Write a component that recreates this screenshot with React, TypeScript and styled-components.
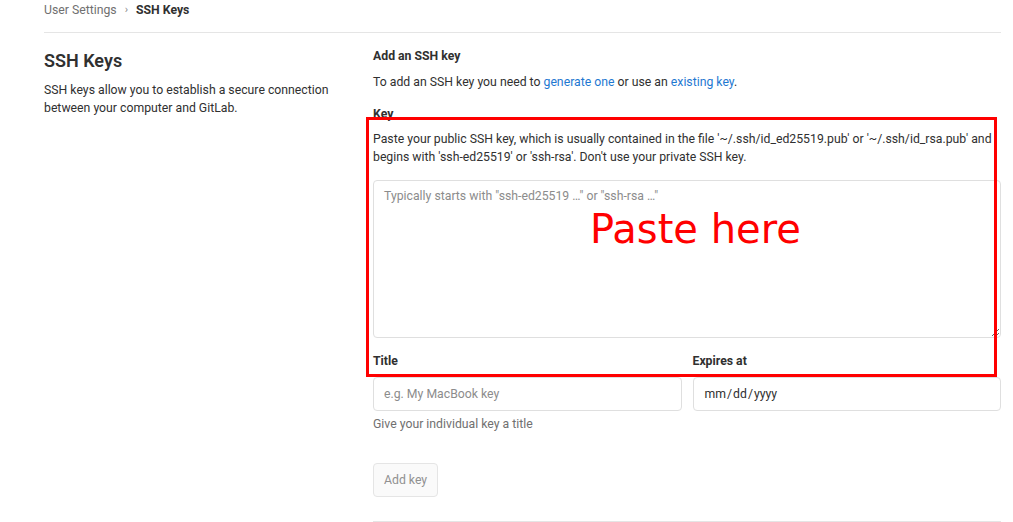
import React from "react";
import styled, { createGlobalStyle } from "styled-components";

const Global = createGlobalStyle`
  html, body { margin: 0; padding: 0; background: #fff; }
  body {
    font-family: Roboto, "Liberation Sans", Arial, sans-serif;
    font-size: 12.25px;
    color: #303030;
  }
  * { box-sizing: border-box; }
`;

const Page = styled.div`
  width: 1013px;
  height: 522px;
  overflow: hidden;
  padding: 0 12px 0 44px;
`;

const Breadcrumbs = styled.nav`
  height: 33px;
  padding-top: 1px;
  border-bottom: 1px solid #e5e5e5;
  display: flex;
  align-items: flex-start;
  gap: 8px;
  line-height: 18px;
  font-size: 12.25px;
  color: #707070;
`;

const Crumb = styled.span<{ $current?: boolean }>`
  color: ${(p) => (p.$current ? "#303030" : "#707070")};
  font-weight: ${(p) => (p.$current ? 700 : 400)};
`;

const Chevron = styled.span`
  font-size: 11px;
  color: #8a8a8a;
`;

const Grid = styled.div`
  display: grid;
  grid-template-columns: 303px 1fr;
  column-gap: 26px;
`;

const Side = styled.div`
  padding-top: 16px;
`;

const SideTitle = styled.h4`
  margin: 0 0 8px;
  font-size: 18px;
  line-height: 24px;
  font-weight: 600;
  color: #303030;
`;

const Para = styled.p<{ $mt?: number }>`
  margin: ${(p) => p.$mt ?? 0}px 0 0;
  line-height: 18px;
  color: #303030;
`;

const Main = styled.div`
  position: relative;
  padding-top: 14px;
  padding-bottom: 24px;
  border-bottom: 1px solid #e5e5e5;
`;

const Heading = styled.h5`
  margin: 0;
  font-size: 12.25px;
  line-height: 18px;
  font-weight: 700;
  color: #303030;
`;

const Link = styled.a`
  color: #1f78d1;
  text-decoration: none;
`;

const Label = styled.label<{ $mt?: number }>`
  display: block;
  margin-top: ${(p) => p.$mt ?? 0}px;
  font-weight: 700;
  line-height: 18px;
  color: #303030;
`;

const TextArea = styled.textarea`
  display: block;
  width: 100%;
  height: 158px;
  margin-top: 14px;
  padding: 6px 10px;
  border: 1px solid #dfdfdf;
  border-radius: 4px;
  font-family: Roboto, "Liberation Sans", Arial, sans-serif;
  font-size: 12.25px;
  line-height: 18px;
  color: #303030;
  outline: none;
  &::placeholder { color: #8c8c8c; }
`;

const FieldRow = styled.div`
  display: grid;
  grid-template-columns: 1fr 1fr;
  column-gap: 11px;
  margin-top: 14px;
`;

const Field = styled.div`
  display: flex;
  flex-direction: column;
`;

const Input = styled.input`
  display: block;
  width: 100%;
  height: 34px;
  margin-top: 7px;
  padding: 0 10px;
  border: 1px solid #dfdfdf;
  border-radius: 4px;
  font-family: Roboto, "Liberation Sans", Arial, sans-serif;
  font-size: 12.25px;
  color: #303030;
  background: #fff;
  outline: none;
  &::placeholder { color: #8c8c8c; }
  &::-webkit-calendar-picker-indicator { display: none; }
`;

const Hint = styled.p`
  margin: 4px 0 0;
  line-height: 18px;
  color: #707070;
`;

const Button = styled.button`
  display: block;
  margin-top: 30px;
  height: 34px;
  padding: 0 10px;
  background: #fafafa;
  border: 1px solid #e5e5e5;
  border-radius: 4px;
  font-family: Roboto, "Liberation Sans", Arial, sans-serif;
  font-size: 12.25px;
  color: #919191;
`;

const Annotation = styled.div`
  position: absolute;
  left: -7px;
  top: 84px;
  width: 631px;
  height: 260px;
  border: 3px solid #ff0000;
  pointer-events: none;
`;

const AnnotationText = styled.span`
  position: absolute;
  left: 221px;
  top: 90px;
  font-family: "DejaVu Sans", Verdana, sans-serif;
  font-size: 40px;
  line-height: 39px;
  color: #ff0000;
  white-space: nowrap;
`;

export default function App() {
  return (
    <>
      <Global />
      <Page>
        <Breadcrumbs>
          <Crumb>User Settings</Crumb>
          <Chevron>›</Chevron>
          <Crumb $current>SSH Keys</Crumb>
        </Breadcrumbs>
        <Grid>
          <Side>
            <SideTitle>SSH Keys</SideTitle>
            <Para>
              SSH keys allow you to establish a secure connection
              <br />
              between your computer and GitLab.
            </Para>
          </Side>
          <Main>
            <Heading>Add an SSH key</Heading>
            <Para $mt={8}>
              To add an SSH key you need to <Link href="#">generate one</Link> or use an{" "}
              <Link href="#">existing key</Link>.
            </Para>
            <Label $mt={14}>Key</Label>
            <Para $mt={7}>
              Paste your public SSH key, which is usually contained in the file '~/.ssh/id_ed25519.pub' or '~/.ssh/id_rsa.pub' and
              <br />
              begins with 'ssh-ed25519' or 'ssh-rsa'. Don't use your private SSH key.
            </Para>
            <TextArea placeholder={'Typically starts with "ssh-ed25519 …" or "ssh-rsa …"'} />
            <FieldRow>
              <Field>
                <Label>Title</Label>
                <Input type="text" placeholder="e.g. My MacBook key" />
                <Hint>Give your individual key a title</Hint>
              </Field>
              <Field>
                <Label>Expires at</Label>
                <Input type="date" />
              </Field>
            </FieldRow>
            <Button disabled>Add key</Button>
            <Annotation>
              <AnnotationText>Paste here</AnnotationText>
            </Annotation>
          </Main>
        </Grid>
      </Page>
    </>
  );
}
